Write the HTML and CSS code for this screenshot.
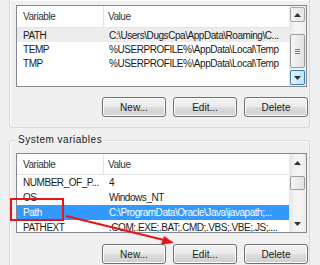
FILE: index.html
```html
<!DOCTYPE html>
<html>
<head>
<meta charset="utf-8">
<link rel="stylesheet" href="styles.css">
</head>
<body>
<div class="wrap">
  <div class="group group-user">
    <div class="list list-user">
      <div class="list-main">
        <div class="head"><span class="c1">Variable</span><span class="c2">Value</span></div>
        <div class="rows rows-user">
          <div class="row sel-inactive"><span class="c1">PATH</span><span class="c2">C:\Users\DugsCpa\AppData\Roaming\C...</span></div>
          <div class="row"><span class="c1">TEMP</span><span class="c2">%USERPROFILE%\AppData\Local\Temp</span></div>
          <div class="row"><span class="c1">TMP</span><span class="c2">%USERPROFILE%\AppData\Local\Temp</span></div>
        </div>
      </div>
      <div class="sbar">
        <div class="sbtn up"><svg width="7" height="4" viewBox="0 0 7 4"><path d="M0 4 L3.5 0 L7 4 Z" fill="#333"/></svg></div>
        <div class="strack"><div class="thumb thumb-user"><i></i><i></i><i></i></div></div>
        <div class="sbtn down hot"><svg width="7" height="4" viewBox="0 0 7 4"><path d="M0 0 L3.5 4 L7 0 Z" fill="#333"/></svg></div>
      </div>
    </div>
    <div class="btns">
      <button class="btn">New...</button>
      <button class="btn">Edit...</button>
      <button class="btn">Delete</button>
    </div>
  </div>

  <div class="group group-sys">
    <div class="legend">System variables</div>
    <div class="list list-sys">
      <div class="list-main">
        <div class="head head-sys"><span class="c1">Variable</span><span class="c2">Value</span></div>
        <div class="rows rows-sys">
          <div class="row"><span class="c1">NUMBER_OF_P...</span><span class="c2">4</span></div>
          <div class="row"><span class="c1">OS</span><span class="c2">Windows_NT</span></div>
          <div class="row sel"><span class="c1">Path</span><span class="c2">C:\ProgramData\Oracle\Java\javapath;...</span></div>
          <div class="row"><span class="c1">PATHEXT</span><span class="c2">.COM;.EXE;.BAT;.CMD;.VBS;.VBE;.JS;....</span></div>
        </div>
      </div>
      <div class="sbar sbar-plain">
        <div class="sbtn up plain"><svg width="7" height="4" viewBox="0 0 7 4"><path d="M0 4 L3.5 0 L7 4 Z" fill="#333"/></svg></div>
        <div class="strack"><div class="thumb thumb-sys"></div></div>
        <div class="sbtn down plain"><svg width="7" height="4" viewBox="0 0 7 4"><path d="M0 0 L3.5 4 L7 0 Z" fill="#333"/></svg></div>
      </div>
    </div>
    <div class="btns btns-sys">
      <button class="btn">New...</button>
      <button class="btn">Edit...</button>
      <button class="btn">Delete</button>
    </div>
  </div>
</div>

<div class="mark"></div>
<svg class="arrow" width="320" height="265" viewBox="0 0 320 265">
  <line x1="66" y1="216" x2="164" y2="240" stroke="#e8141c" stroke-width="2"/>
  <path d="M174 243 L161 244.5 L164 236 Z" fill="#e8141c"/>
</svg>
</body>
</html>
```

FILE: styles.css
```css
* { box-sizing: border-box; }
html, body { margin: 0; padding: 0; }
body {
  width: 320px;
  height: 265px;
  overflow: hidden;
  background: #f0f0f0;
  font-family: "Liberation Sans", Arial, sans-serif;
  font-size: 10px;
  color: #1a1a1a;
  position: relative;
}
.wrap {
  padding-left: 9px;
  width: 310px;
}
.group {
  width: 301px;
  border: 1px solid #d5d9dd;
  border-radius: 3px;
  box-shadow: inset 1px 1px 0 #fbfbfb;
}
.group-user {
  border-top: none;
  border-radius: 0 0 3px 3px;
  padding: 5px 1px 10px 6px;
}
.group-sys {
  margin-top: 12px;
  padding: 0 1px 0 6px;
  height: 125px;
  border-bottom: none;
  border-radius: 3px 3px 0 0;
}
.legend {
  display: table;
  margin: -7px 0 0 0;
  padding: 0 2px;
  background: #f0f0f0;
  line-height: 12px;
  height: 12px;
  letter-spacing: 0.5px;
  color: #1a1a1a;
}
.list {
  width: 291px;
  border: 1px solid #828790;
  background: #fff;
  display: flex;
  letter-spacing: -0.45px;
}
.list-user { height: 82px; }
.list-sys { height: 80px; margin-top: 7px; }
.list-main {
  flex: 1;
  overflow: hidden;
}
.head {
  height: 22px;
  border-bottom: 1px solid #e5e5e5;
  display: flex;
  align-items: center;
}
.head-sys { height: 21px; }
.head .c1 { border-right: 1px solid #e5e5e5; height: 100%; display: flex; align-items: center; }
.head span { color: #333; }
.c1 {
  width: 87px;
  padding-left: 6px;
  flex: none;
  white-space: nowrap;
}
.c2 {
  padding-left: 5px;
  white-space: nowrap;
}
.head .c2 { padding-left: 4px; }
.row {
  display: flex;
  align-items: center;
}
.rows-user .row { height: 14px; }
.rows-sys .row { height: 15px; }
.sel-inactive { background: #ececec; }
.sel { background: #3399ff; color: #fff; }

.sbar {
  width: 17px;
  flex: none;
  display: flex;
  flex-direction: column;
  background: linear-gradient(90deg, #e6e6e6, #f4f4f4 40%, #f4f4f4 70%, #e9e9e9);
  padding: 1px 1px;
}
.sbtn {
  height: 15px;
  flex: none;
  display: flex;
  align-items: center;
  justify-content: center;
  border: 1px solid #a8a8a8;
  border-radius: 2px;
  background: linear-gradient(90deg, #f2f2f2, #e6e6e6);
}
.sbtn.hot {
  border-color: #3c7fb1;
  background: linear-gradient(90deg, #e3f3fd, #bde2f9);
}
.sbtn.plain {
  border-color: transparent;
  background: transparent;
}
.strack {
  flex: 1;
  display: flex;
  flex-direction: column;
}
.thumb {
  border: 1px solid #9c9c9c;
  border-radius: 2px;
  background: linear-gradient(90deg, #f5f5f5, #e2e2e2);
  display: flex;
  flex-direction: column;
  align-items: center;
  justify-content: center;
  gap: 1px;
}
.thumb i {
  display: block;
  width: 5px;
  height: 1px;
  background: #7a7a7a;
}
.thumb-user { margin-top: 12px; height: 34px; }
.thumb-sys { margin-top: 6px; height: 14px; }

.btns {
  display: flex;
  justify-content: flex-end;
  gap: 7px;
  margin-top: 10px;
}
.btns-sys { margin-top: 11px; }
.btn {
  width: 64px;
  height: 20px;
  padding: 0;
  font-family: "Liberation Sans", Arial, sans-serif;
  font-size: 10px;
  color: #1a1a1a;
  border: 1px solid #707070;
  border-radius: 3px;
  background: linear-gradient(180deg, #f2f2f2 0%, #ebebeb 50%, #dddddd 51%, #cfcfcf 100%);
  box-shadow: inset 0 0 0 1px #fcfcfc;
}

.mark {
  position: absolute;
  left: 10px;
  top: 198px;
  width: 54px;
  height: 23px;
  border: 2px solid #e8141c;
}
.arrow {
  position: absolute;
  left: 0;
  top: 0;
}
```
